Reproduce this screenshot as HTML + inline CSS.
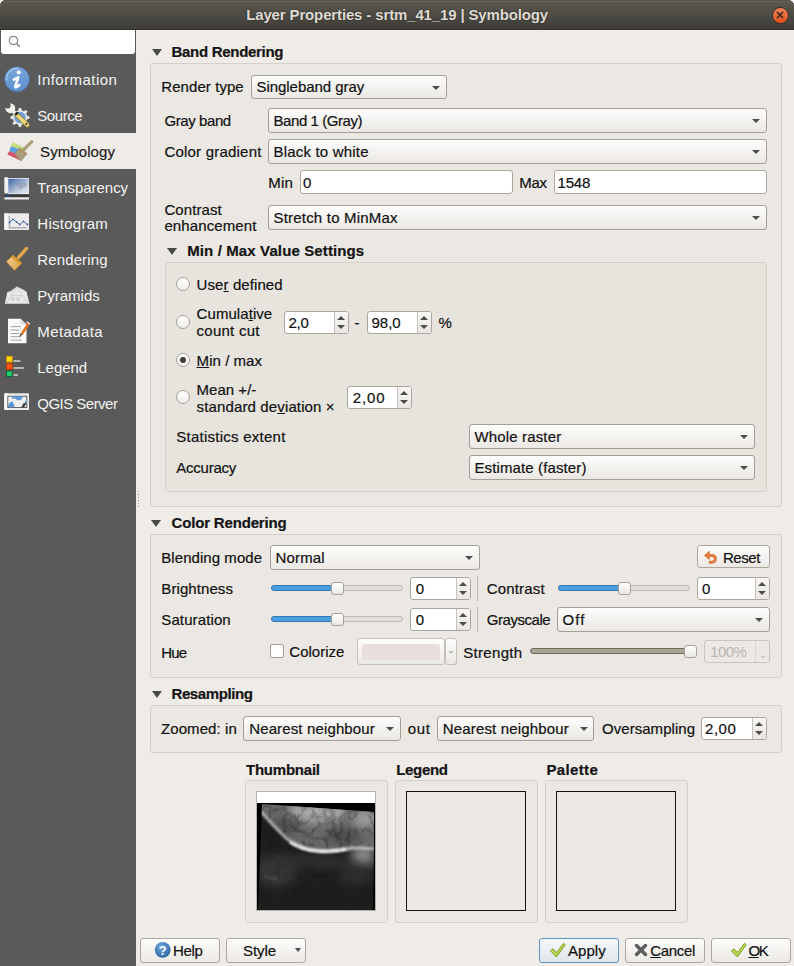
<!DOCTYPE html><html><head><meta charset="utf-8"><style>
*{box-sizing:border-box}
body{margin:0;width:794px;height:966px;position:relative;overflow:hidden;background:#fff;font-family:"Liberation Sans",sans-serif;color:#111}
.t{-webkit-text-stroke:0.2px currentColor}
.t{position:absolute;white-space:nowrap}
.cb,.le,.gb,.bt,.rb,.sp,.arr,.trk,.trkb,.hdl,.ab{position:absolute}
.cb{border:1px solid #a39f98;border-radius:3px;background:linear-gradient(#fdfdfc,#ebe8e4)}
.le{border:1px solid #aba79f;border-radius:3px;background:#fff}
.gb{border:1px solid #d3cfca;border-radius:3px;background:rgba(40,30,20,0.018)}
.bt{border:1px solid #aba79f;border-radius:3px;background:linear-gradient(#fdfdfc,#ebe8e4)}
.bd{position:absolute;border:1px solid #5f93c6;border-radius:3px;background:linear-gradient(#f6f8fa,#dfe6ec)}
.rb{width:14px;height:14px;border-radius:50%;border:1px solid #a3a09a;background:linear-gradient(#fff,#f0eeeb)}
.arr{width:0;height:0}
.trk{height:6px;border-radius:3px;background:#e2dfda;border:1px solid #bdb9b3}
.trkb{height:6px;border-radius:3px;background:#4a9fe2;border:1px solid #3578b4}
.hdl{width:13px;height:13px;border-radius:3px;border:1px solid #a6a29b;background:linear-gradient(#fff,#eae7e3)}
</style></head><body>
<div style="position:absolute;left:0;top:0;width:794px;height:966px;background:#efece8;border-radius:6px 6px 0 0"></div>
<div style="position:absolute;left:0;top:0;width:794px;height:30px;border-radius:6px 6px 0 0;background:linear-gradient(#5c5951,#3d3c37);box-shadow:inset 0 1px 0 #57544c, inset 0 2px 0 #656258, inset 0 -1px 0 #33322e"></div>
<div class="t" style="left:246.20px;top:6.70px;font-size:15px;line-height:15px;letter-spacing:-0.141px;font-weight:bold;color:#dfdbd2;-webkit-text-stroke:0;text-shadow:0 0 1.5px #1e1d1a;">Layer Properties - srtm_41_19 | Symbology</div>
<div style="position:absolute;left:771.5px;top:6.5px;width:17px;height:17px;border-radius:50%;background:linear-gradient(#f0825a,#e0521c);border:1px solid #3a2d25"></div>
<svg style="position:absolute;left:774px;top:9px" width="12" height="12"><path d="M3 3L9 9M9 3L3 9" stroke="#3b2a1e" stroke-width="1.6"/></svg>
<div style="position:absolute;left:0;top:30px;width:136px;height:936px;background:#5a5a5a"></div>
<div style="position:absolute;left:1px;top:30px;width:134px;height:24px;background:#fff;border-radius:0 0 3px 3px"></div>
<svg style="position:absolute;left:8px;top:35px" width="14" height="14"><circle cx="5.5" cy="5.5" r="4.2" fill="none" stroke="#8a8a8a" stroke-width="1.2"/><path d="M8.6 8.6L12 12" stroke="#8a8a8a" stroke-width="1.5"/></svg>
<div style="position:absolute;left:0;top:133px;width:136px;height:36px;background:#efece8"></div>
<div class="t" style="left:37.30px;top:72.20px;font-size:15px;line-height:15px;letter-spacing:0.455px;color:#f4f3f1;-webkit-text-stroke:0;">Information</div>
<div class="t" style="left:37.30px;top:108.20px;font-size:15px;line-height:15px;letter-spacing:-0.450px;color:#f4f3f1;-webkit-text-stroke:0;">Source</div>
<div class="t" style="left:40.10px;top:144.20px;font-size:15px;line-height:15px;letter-spacing:0.075px;color:#1c1c1c;">Symbology</div>
<div class="t" style="left:37.30px;top:180.20px;font-size:15px;line-height:15px;letter-spacing:-0.032px;color:#f4f3f1;-webkit-text-stroke:0;">Transparency</div>
<div class="t" style="left:37.30px;top:216.20px;font-size:15px;line-height:15px;letter-spacing:0.269px;color:#f4f3f1;-webkit-text-stroke:0;">Histogram</div>
<div class="t" style="left:37.30px;top:252.20px;font-size:15px;line-height:15px;letter-spacing:0.125px;color:#f4f3f1;-webkit-text-stroke:0;">Rendering</div>
<div class="t" style="left:37.30px;top:288.20px;font-size:15px;line-height:15px;letter-spacing:-0.014px;color:#f4f3f1;-webkit-text-stroke:0;">Pyramids</div>
<div class="t" style="left:37.30px;top:324.20px;font-size:15px;line-height:15px;letter-spacing:0.393px;color:#f4f3f1;-webkit-text-stroke:0;">Metadata</div>
<div class="t" style="left:37.30px;top:360.20px;font-size:15px;line-height:15px;letter-spacing:-0.030px;color:#f4f3f1;-webkit-text-stroke:0;">Legend</div>
<div class="t" style="left:37.30px;top:396.20px;font-size:15px;line-height:15px;letter-spacing:-0.525px;color:#f4f3f1;-webkit-text-stroke:0;">QGIS Server</div>
<div style="position:absolute;left:138px;top:491px;width:1px;height:1px;background:#9a9893"></div>
<div style="position:absolute;left:138px;top:494px;width:1px;height:1px;background:#9a9893"></div>
<div style="position:absolute;left:138px;top:497px;width:1px;height:1px;background:#9a9893"></div>
<div style="position:absolute;left:138px;top:500px;width:1px;height:1px;background:#9a9893"></div>
<div style="position:absolute;left:138px;top:503px;width:1px;height:1px;background:#9a9893"></div>
<div style="position:absolute;left:138px;top:506px;width:1px;height:1px;background:#9a9893"></div>
<svg style="position:absolute;left:0;top:61px" width="36" height="36"><defs><linearGradient id="ig" x1="0" y1="0" x2="0" y2="1"><stop offset="0" stop-color="#7ba8dc"/><stop offset="1" stop-color="#5d8fcc"/></linearGradient></defs><circle cx="17" cy="18.2" r="12.3" fill="url(#ig)" stroke="#4f7cb9" stroke-width="0.9"/><path d="M6.8 19.5A10.5 10.5 0 0 1 18.5 7.2" fill="none" stroke="#a9c8ec" stroke-width="1.3"/><circle cx="18.8" cy="11.3" r="2.1" fill="#fff"/><path d="M13.8 18.6L18.2 16.4L15.4 25.3Q15.1 26.6 16.4 26.1L19.4 24.2" fill="none" stroke="#fff" stroke-width="2.7" stroke-linejoin="round" stroke-linecap="round"/></svg>
<svg style="position:absolute;left:0;top:97px" width="36" height="36"><path d="M26.9 19.3 L29.1 19.5 L29.1 21.5 L26.9 21.7 L25.7 24.5 L27.2 26.3 L25.8 27.7 L24.0 26.2 L21.2 27.4 L21.0 29.6 L19.0 29.6 L18.8 27.4 L16.0 26.2 L14.2 27.7 L12.8 26.3 L14.3 24.5 L13.1 21.7 L10.9 21.5 L10.9 19.5 L13.1 19.3 L14.3 16.5 L12.8 14.7 L14.2 13.3 L16.0 14.8 L18.8 13.6 L19.0 11.4 L21.0 11.4 L21.2 13.6 L24.0 14.8 L25.8 13.3 L27.2 14.7 L25.7 16.5Z" fill="#ececec" stroke="#ececec" stroke-width="0.8" stroke-linejoin="round"/><circle cx="20" cy="20.5" r="5.8" fill="#6d9fd8"/><path d="M11.5 13L16.5 17.5" stroke="#e6e7e3" stroke-width="3.6" stroke-linecap="round"/><circle cx="10.3" cy="11.3" r="4.9" fill="#eeefeb"/><circle cx="7.6" cy="8.6" r="3" fill="#5a5a5a"/><path d="M17 18L27.3 28" stroke="#8a7a30" stroke-width="5" stroke-linecap="round"/><path d="M17.2 18.2L27.2 27.9" stroke="#ecd77a" stroke-width="3.6" stroke-linecap="round"/><path d="M15.3 17.9L17.9 15.4" stroke="#222" stroke-width="2.2"/><circle cx="26.3" cy="27" r="1.1" fill="#333"/></svg>
<svg style="position:absolute;left:0;top:133px" width="36" height="36"><path d="M12.5 9.2L24.6 14.7L23 17.5L11 13.2Z" fill="#c6db7a"/><path d="M11 13.2L23 17.5L20.5 22L9.2 18.2Z" fill="#5b9fdc"/><path d="M9.2 18.2L20.5 22L21 27.8L7.3 21.6Z" fill="#d2566a"/><path d="M14.6 20.8L19.6 15L26.6 21.2L21 28Z" fill="#aa9f7e" stroke="#8f8466" stroke-width="0.6"/><path d="M22 18.5L31.8 8.7" stroke="#ad9f78" stroke-width="3.2" stroke-linecap="round"/><path d="M19 15.5L26.8 21.5" stroke="#a89670" stroke-width="2.4"/></svg>
<svg style="position:absolute;left:0;top:169px" width="36" height="36"><defs><linearGradient id="tg" x1="0" y1="0" x2="1" y2="1"><stop offset="0" stop-color="#3d62a8"/><stop offset="0.6" stop-color="#b9c6dc"/><stop offset="1" stop-color="#e9ecf1"/></linearGradient></defs><rect x="4.3" y="8" width="3.8" height="16.5" rx="1.6" fill="#f1f1f1"/><rect x="8" y="9" width="21" height="16" fill="#eef0f3"/><rect x="8.3" y="9.8" width="20.4" height="14.6" fill="url(#tg)"/><path d="M16 13.5l4 0.5 6-1 1 3-2 2-3 1-1 2.5-2-2-1-3-2-1z M10.5 16l2 1 1 3-1.5 2z" fill="#8b96a8" opacity="0.55"/><rect x="4.3" y="25.7" width="24.7" height="2.4" fill="#3a3a3a"/><rect x="6.7" y="25.3" width="2" height="3.6" rx="0.8" fill="#2a56a0"/><rect x="4.3" y="28.3" width="24.7" height="2.2" fill="#ededed"/></svg>
<svg style="position:absolute;left:0;top:205px" width="36" height="36"><rect x="4.3" y="8.3" width="24.7" height="16.7" fill="#ebebeb"/><rect x="4.3" y="8" width="3.8" height="17" rx="1.6" fill="#f6f6f6"/><path d="M9.4 11v11.7h17.5" fill="none" stroke="#b2b2b2" stroke-width="1.4"/><path d="M9.5 17.5L12.8 14.3L16.5 16.8L19.7 19.5L23.4 16.4L27.4 19.5" fill="none" stroke="#3a62a8" stroke-width="0.9"/><g fill="#3a62a8"><circle cx="9.5" cy="17.5" r="0.9"/><circle cx="12.8" cy="14.3" r="0.9"/><circle cx="16.5" cy="16.8" r="0.9"/><circle cx="19.7" cy="19.5" r="0.9"/><circle cx="23.4" cy="16.4" r="0.9"/><circle cx="27.4" cy="19.5" r="0.9"/></g></svg>
<svg style="position:absolute;left:0;top:241px" width="36" height="36"><defs><linearGradient id="rg" x1="0" y1="0" x2="1" y2="1"><stop offset="0" stop-color="#f2cf8e"/><stop offset="1" stop-color="#d9a148"/></linearGradient></defs><path d="M18.5 16.5L26.5 7.5" stroke="#e0a548" stroke-width="3.4" stroke-linecap="round"/><path d="M6.3 20.6L13.2 14.2L21.5 22.3L14.6 29.4Z" fill="url(#rg)" stroke="#c88a30" stroke-width="0.7"/><path d="M12.2 15L21.2 23" stroke="#d8982e" stroke-width="2.6"/></svg>
<svg style="position:absolute;left:0;top:277px" width="36" height="36"><path d="M4.8 26.8L7.3 15L10.5 14.2L17 9.4L23.5 12.8L26.5 14.8L29.5 26.8Z" fill="#e9e9e9"/><path d="M6.5 26L17 9.8L27.5 26M10.5 18.7H23" fill="none" stroke="#c9c9c9" stroke-width="0.8"/><path d="M11.5 20.5l1.5 3 1-2.5M17 20.3l1 3 1.5-2.5" fill="none" stroke="#b8b8b8" stroke-width="0.9"/></svg>
<svg style="position:absolute;left:0;top:313px" width="36" height="36"><path d="M8 5.8H20.5L26.5 11.5V30.3H8Z" fill="#fafafa"/><path d="M20.5 5.8V11.5H26.5" fill="#dedede"/><g stroke="#9a9a9a" stroke-width="0.9"><path d="M10.6 13.6H21M10.6 17H19M10.6 20.5H19M10.6 23.7H21M10.6 27.1H22"/></g><path d="M19.5 24L21.3 19.5L27.6 9.3L30 10.5L23.5 21Z" fill="#e8742a"/><path d="M27 8.2L30.3 10.3L29.5 11.4L26.2 9.4Z" fill="#e6d5cf"/><path d="M19.2 24L20.5 20L22.5 21.5Z" fill="#555"/></svg>
<svg style="position:absolute;left:0;top:349px" width="36" height="36"><rect x="6.6" y="7.4" width="5.6" height="5.6" fill="#ffd800" stroke="#e89a00" stroke-width="0.9"/><rect x="6.6" y="14.7" width="5.6" height="5.6" fill="#ff5a10" stroke="#c03000" stroke-width="0.9"/><rect x="6.6" y="22" width="5.6" height="5.6" fill="#22d068" stroke="#0a5a30" stroke-width="0.9"/><g fill="#b5b5b5"><rect x="13.5" y="11" width="7" height="2"/><rect x="13.5" y="18" width="10.5" height="2"/><rect x="13.5" y="25" width="4.5" height="2"/></g></svg>
<svg style="position:absolute;left:0;top:385px" width="36" height="36"><rect x="4.3" y="8.3" width="24.7" height="16.7" fill="#ececec"/><rect x="4.3" y="8" width="3.8" height="17" rx="1.6" fill="#f8f8f8"/><rect x="7.8" y="11.2" width="19" height="11.4" fill="#eeeeee" stroke="#444" stroke-width="0.8"/><path d="M12 11.5H23L21.5 14.5L18 15.5L15 13.5L12.2 13.7Z M8.2 22.3V20L10.5 17L12.5 16.5L14 19.5L14.5 22.3Z M24.5 17.5L26.3 15V19Z" fill="#5b96d8"/><path d="M21 22.6L23.5 18.3L26.8 17.8L24 22.6Z" fill="#444"/></svg>

<div class="arr" style="left:151.5px;top:49px;border-left:5.5px solid transparent;border-right:5.5px solid transparent;border-top:7px solid #4a4a4a;"></div>
<div class="t" style="left:171.50px;top:44.10px;font-size:15px;line-height:15px;letter-spacing:-0.296px;font-weight:bold;color:#141414;">Band Rendering</div>
<div class="gb" style="left:150px;top:63px;width:632px;height:444px;"></div>
<div class="t" style="left:161.30px;top:79.40px;font-size:15px;line-height:15px;letter-spacing:0.070px;">Render type</div>
<div class="cb" style="left:251px;top:75px;width:196px;height:24px;"></div>
<div class="t" style="left:256.50px;top:79.40px;font-size:15px;line-height:15px;letter-spacing:-0.050px;">Singleband gray</div>
<div class="arr" style="left:432.0px;top:85.5px;border-left:4.0px solid transparent;border-right:4.0px solid transparent;border-top:4px solid #4c4c4c;"></div>
<div class="t" style="left:164.40px;top:113.40px;font-size:15px;line-height:15px;letter-spacing:-0.406px;">Gray band</div>
<div class="cb" style="left:268px;top:108px;width:499px;height:25px;"></div>
<div class="t" style="left:273.50px;top:113.40px;font-size:15px;line-height:15px;letter-spacing:-0.433px;">Band 1 (Gray)</div>
<div class="arr" style="left:751.5px;top:119.0px;border-left:4.0px solid transparent;border-right:4.0px solid transparent;border-top:4px solid #4c4c4c;"></div>
<div class="t" style="left:164.40px;top:144.30px;font-size:15px;line-height:15px;letter-spacing:0.215px;">Color gradient</div>
<div class="cb" style="left:268px;top:139px;width:499px;height:25px;"></div>
<div class="t" style="left:273.50px;top:144.30px;font-size:15px;line-height:15px;letter-spacing:0.188px;">Black to white</div>
<div class="arr" style="left:751.5px;top:150.0px;border-left:4.0px solid transparent;border-right:4.0px solid transparent;border-top:4px solid #4c4c4c;"></div>
<div class="t" style="left:268.20px;top:174.60px;font-size:15px;line-height:15px;letter-spacing:0.225px;">Min</div>
<div class="le" style="left:300px;top:170px;width:213px;height:24px;"></div>
<div class="t" style="left:303.00px;top:174.60px;font-size:15px;line-height:15px;">0</div>
<div class="t" style="left:519.30px;top:174.60px;font-size:15px;line-height:15px;letter-spacing:-0.375px;">Max</div>
<div class="le" style="left:554px;top:170px;width:213px;height:24px;"></div>
<div class="t" style="left:557.50px;top:174.60px;font-size:15px;line-height:15px;letter-spacing:-0.183px;">1548</div>
<div class="t" style="left:164.40px;top:201.90px;font-size:15px;line-height:15px;letter-spacing:0.100px;">Contrast</div>
<div class="t" style="left:164.40px;top:218.30px;font-size:15px;line-height:15px;letter-spacing:0.110px;">enhancement</div>
<div class="cb" style="left:268px;top:205px;width:499px;height:25px;"></div>
<div class="t" style="left:273.50px;top:210.30px;font-size:15px;line-height:15px;letter-spacing:0.197px;">Stretch to MinMax</div>
<div class="arr" style="left:751.5px;top:216.0px;border-left:4.0px solid transparent;border-right:4.0px solid transparent;border-top:4px solid #4c4c4c;"></div>
<div class="arr" style="left:167px;top:248px;border-left:5.0px solid transparent;border-right:5.0px solid transparent;border-top:7px solid #4a4a4a;"></div>
<div class="t" style="left:187.20px;top:243.30px;font-size:15px;line-height:15px;letter-spacing:0.122px;font-weight:bold;color:#141414;">Min / Max Value Settings</div>
<div class="gb" style="left:165px;top:262px;width:602px;height:230px;"></div>
<div class="rb" style="left:176px;top:277px;"></div>
<div class="t" style="left:196.60px;top:277.30px;font-size:15px;line-height:15px;letter-spacing:0.086px;">Use<u>r</u> defined</div>
<div class="rb" style="left:176px;top:315px;"></div>
<div class="t" style="left:196.60px;top:305.90px;font-size:15px;line-height:15px;letter-spacing:0.061px;">Cumula<u>t</u>ive</div>
<div class="t" style="left:196.60px;top:322.90px;font-size:15px;line-height:15px;letter-spacing:0.244px;">count cut</div>
<div class="le" style="left:284px;top:311px;width:65px;height:23px;"></div>
<div class="t" style="left:288.60px;top:315.10px;font-size:15px;line-height:15px;letter-spacing:-0.325px;">2,0</div>
<div class="sp" style="left:334px;top:312px;width:14px;height:21px;border-left:1px solid #c6c2bb;background:linear-gradient(#f8f7f5,#e9e6e2);border-radius:0 2px 2px 0"></div>
<div class="arr" style="left:337px;top:315.5px;border-left:4px solid transparent;border-right:4px solid transparent;border-bottom:4px solid #4c4c4c;"></div>
<div class="arr" style="left:337px;top:324.5px;border-left:4px solid transparent;border-right:4px solid transparent;border-top:4px solid #4c4c4c;"></div>
<div class="t" style="left:354.60px;top:315.10px;font-size:15px;line-height:15px;">-</div>
<div class="le" style="left:367px;top:311px;width:65px;height:23px;"></div>
<div class="t" style="left:371.60px;top:315.10px;font-size:15px;line-height:15px;letter-spacing:-0.067px;">98,0</div>
<div class="sp" style="left:417px;top:312px;width:14px;height:21px;border-left:1px solid #c6c2bb;background:linear-gradient(#f8f7f5,#e9e6e2);border-radius:0 2px 2px 0"></div>
<div class="arr" style="left:420px;top:315.5px;border-left:4px solid transparent;border-right:4px solid transparent;border-bottom:4px solid #4c4c4c;"></div>
<div class="arr" style="left:420px;top:324.5px;border-left:4px solid transparent;border-right:4px solid transparent;border-top:4px solid #4c4c4c;"></div>
<div class="t" style="left:438.40px;top:315.10px;font-size:15px;line-height:15px;">%</div>
<div class="rb" style="left:176px;top:353px;"></div>
<div style="position:absolute;left:180px;top:357px;width:6px;height:6px;border-radius:50%;background:#3c3c3c"></div>
<div class="t" style="left:196.60px;top:353.30px;font-size:15px;line-height:15px;letter-spacing:0.050px;"><u>M</u>in / max</div>
<div class="rb" style="left:176px;top:390px;"></div>
<div class="t" style="left:196.60px;top:382.20px;font-size:15px;line-height:15px;letter-spacing:0.014px;">Mean +/-</div>
<div class="t" style="left:196.60px;top:399.20px;font-size:15px;line-height:15px;letter-spacing:0.132px;">standard de<u>v</u>iation ×</div>
<div class="le" style="left:347px;top:386px;width:65px;height:23px;"></div>
<div class="t" style="left:352.70px;top:390.30px;font-size:15px;line-height:15px;letter-spacing:0.933px;">2,00</div>
<div class="sp" style="left:397px;top:387px;width:14px;height:21px;border-left:1px solid #c6c2bb;background:linear-gradient(#f8f7f5,#e9e6e2);border-radius:0 2px 2px 0"></div>
<div class="arr" style="left:400px;top:390.5px;border-left:4px solid transparent;border-right:4px solid transparent;border-bottom:4px solid #4c4c4c;"></div>
<div class="arr" style="left:400px;top:399.5px;border-left:4px solid transparent;border-right:4px solid transparent;border-top:4px solid #4c4c4c;"></div>
<div class="t" style="left:176.30px;top:428.80px;font-size:15px;line-height:15px;letter-spacing:0.247px;">Statistics extent</div>
<div class="cb" style="left:469px;top:424px;width:286px;height:25px;"></div>
<div class="t" style="left:474.40px;top:428.80px;font-size:15px;line-height:15px;letter-spacing:0.159px;">Whole raster</div>
<div class="arr" style="left:740.0px;top:435.0px;border-left:4.0px solid transparent;border-right:4.0px solid transparent;border-top:4px solid #4c4c4c;"></div>
<div class="t" style="left:176.30px;top:460.10px;font-size:15px;line-height:15px;letter-spacing:-0.243px;">Accuracy</div>
<div class="cb" style="left:469px;top:455px;width:286px;height:25px;"></div>
<div class="t" style="left:474.40px;top:460.10px;font-size:15px;line-height:15px;letter-spacing:0.125px;">Estimate (faster)</div>
<div class="arr" style="left:740.0px;top:466.0px;border-left:4.0px solid transparent;border-right:4.0px solid transparent;border-top:4px solid #4c4c4c;"></div>
<div class="arr" style="left:151px;top:520px;border-left:5.5px solid transparent;border-right:5.5px solid transparent;border-top:7px solid #4a4a4a;"></div>
<div class="t" style="left:171.60px;top:515.10px;font-size:15px;line-height:15px;letter-spacing:-0.179px;font-weight:bold;color:#141414;">Color Rendering</div>
<div class="gb" style="left:150px;top:534px;width:632px;height:144px;"></div>
<div class="t" style="left:161.30px;top:549.80px;font-size:15px;line-height:15px;letter-spacing:0.054px;">Blending mode</div>
<div class="cb" style="left:270px;top:545px;width:210px;height:25px;"></div>
<div class="t" style="left:275.60px;top:549.80px;font-size:15px;line-height:15px;letter-spacing:0.130px;">Normal</div>
<div class="arr" style="left:464.5px;top:556.0px;border-left:4.0px solid transparent;border-right:4.0px solid transparent;border-top:4px solid #4c4c4c;"></div>
<div class="bt" style="left:697px;top:545px;width:73px;height:23px;"></div>
<div class="t" style="left:722.90px;top:550.00px;font-size:15px;line-height:15px;letter-spacing:-0.425px;">Reset</div>
<div class="t" style="left:161.30px;top:580.60px;font-size:15px;line-height:15px;letter-spacing:0.083px;">Brightness</div>
<div class="trk" style="left:271px;top:585px;width:132px;"></div>
<div class="trkb" style="left:271px;top:585px;width:62px;"></div>
<div class="hdl" style="left:331px;top:582px;"></div>
<div class="le" style="left:410px;top:577px;width:61px;height:23px;"></div>
<div class="t" style="left:415.70px;top:581.30px;font-size:15px;line-height:15px;">0</div>
<div class="sp" style="left:456px;top:578px;width:14px;height:21px;border-left:1px solid #c6c2bb;background:linear-gradient(#f8f7f5,#e9e6e2);border-radius:0 2px 2px 0"></div>
<div class="arr" style="left:459px;top:581.5px;border-left:4px solid transparent;border-right:4px solid transparent;border-bottom:4px solid #4c4c4c;"></div>
<div class="arr" style="left:459px;top:590.5px;border-left:4px solid transparent;border-right:4px solid transparent;border-top:4px solid #4c4c4c;"></div>
<div style="position:absolute;left:477px;top:576px;width:1px;height:25px;background:#bdb9b2"></div>
<div class="t" style="left:486.70px;top:581.30px;font-size:15px;line-height:15px;letter-spacing:0.186px;">Contrast</div>
<div class="trk" style="left:558px;top:585px;width:132px;"></div>
<div class="trkb" style="left:558px;top:585px;width:62px;"></div>
<div class="hdl" style="left:618px;top:582px;"></div>
<div class="le" style="left:697px;top:577px;width:73px;height:23px;"></div>
<div class="t" style="left:702.00px;top:581.30px;font-size:15px;line-height:15px;">0</div>
<div class="sp" style="left:755px;top:578px;width:14px;height:21px;border-left:1px solid #c6c2bb;background:linear-gradient(#f8f7f5,#e9e6e2);border-radius:0 2px 2px 0"></div>
<div class="arr" style="left:758px;top:581.5px;border-left:4px solid transparent;border-right:4px solid transparent;border-bottom:4px solid #4c4c4c;"></div>
<div class="arr" style="left:758px;top:590.5px;border-left:4px solid transparent;border-right:4px solid transparent;border-top:4px solid #4c4c4c;"></div>
<div class="t" style="left:161.30px;top:611.90px;font-size:15px;line-height:15px;letter-spacing:0.111px;">Saturation</div>
<div class="trk" style="left:271px;top:616px;width:132px;"></div>
<div class="trkb" style="left:271px;top:616px;width:62px;"></div>
<div class="hdl" style="left:331px;top:613px;"></div>
<div class="le" style="left:410px;top:608px;width:61px;height:23px;"></div>
<div class="t" style="left:415.70px;top:612.30px;font-size:15px;line-height:15px;">0</div>
<div class="sp" style="left:456px;top:609px;width:14px;height:21px;border-left:1px solid #c6c2bb;background:linear-gradient(#f8f7f5,#e9e6e2);border-radius:0 2px 2px 0"></div>
<div class="arr" style="left:459px;top:612.5px;border-left:4px solid transparent;border-right:4px solid transparent;border-bottom:4px solid #4c4c4c;"></div>
<div class="arr" style="left:459px;top:621.5px;border-left:4px solid transparent;border-right:4px solid transparent;border-top:4px solid #4c4c4c;"></div>
<div style="position:absolute;left:477px;top:607px;width:1px;height:25px;background:#bdb9b2"></div>
<div class="t" style="left:486.70px;top:612.30px;font-size:15px;line-height:15px;letter-spacing:-0.438px;">Grayscale</div>
<div class="cb" style="left:557px;top:607px;width:213px;height:25px;"></div>
<div class="t" style="left:562.40px;top:612.30px;font-size:15px;line-height:15px;letter-spacing:1.125px;">Off</div>
<div class="arr" style="left:754.5px;top:618.0px;border-left:4.0px solid transparent;border-right:4.0px solid transparent;border-top:4px solid #4c4c4c;"></div>
<div class="t" style="left:161.30px;top:645.00px;font-size:15px;line-height:15px;letter-spacing:-0.900px;">Hue</div>
<div style="position:absolute;left:270px;top:644px;width:14px;height:14px;border:1px solid #a3a09a;border-radius:2px;background:#fff"></div>
<div class="t" style="left:289.30px;top:644.10px;font-size:15px;line-height:15px;">Colorize</div>
<div class="bt" style="left:357px;top:638px;width:88px;height:27px;border-color:#c3bfb9"></div>
<div style="position:absolute;left:362px;top:644px;width:78px;height:16px;border-radius:3px;background:#e8dfdd"></div>
<div class="bt" style="left:445px;top:638px;width:12px;height:27px;border-color:#c3bfb9"></div>
<div class="arr" style="left:448.0px;top:650.5px;border-left:3.0px solid transparent;border-right:3.0px solid transparent;border-top:3px solid #c0bdb7;"></div>
<div class="t" style="left:463.20px;top:644.80px;font-size:15px;line-height:15px;letter-spacing:0.329px;">Strength</div>
<div class="trk" style="left:530px;top:648px;width:166px;background:#a9a594;border-color:#6f6c60"></div>
<div class="hdl" style="left:684px;top:645px;"></div>
<div class="le" style="left:704px;top:640px;width:66px;height:23px;background:#ece9e5;border-color:#c9c6c0;"></div>
<div class="t" style="left:710.20px;top:644.30px;font-size:15px;line-height:15px;letter-spacing:-0.583px;color:#bdbab4;">100%</div>
<div class="sp" style="left:755px;top:641px;height:21px;border-left:1px solid #d9d6d1"></div>
<div class="arr" style="left:759.5px;top:655.5px;border-left:3px solid transparent;border-right:3px solid transparent;border-top:3px solid #d0cdc7;"></div>
<div class="arr" style="left:152px;top:691px;border-left:5.5px solid transparent;border-right:5.5px solid transparent;border-top:7px solid #4a4a4a;"></div>
<div class="t" style="left:171.50px;top:685.70px;font-size:15px;line-height:15px;letter-spacing:-0.400px;font-weight:bold;color:#141414;">Resampling</div>
<div class="gb" style="left:150px;top:705px;width:632px;height:48px;"></div>
<div class="t" style="left:161.00px;top:721.20px;font-size:15px;line-height:15px;letter-spacing:0.083px;">Zoomed: in</div>
<div class="cb" style="left:243px;top:716px;width:158px;height:25px;"></div>
<div class="t" style="left:249.20px;top:721.20px;font-size:15px;line-height:15px;letter-spacing:0.137px;">Nearest neighbour</div>
<div class="arr" style="left:385.7px;top:727.0px;border-left:4.0px solid transparent;border-right:4.0px solid transparent;border-top:4px solid #4c4c4c;"></div>
<div class="t" style="left:407.80px;top:721.20px;font-size:15px;line-height:15px;letter-spacing:0.575px;">out</div>
<div class="cb" style="left:437px;top:716px;width:157px;height:25px;"></div>
<div class="t" style="left:442.80px;top:721.20px;font-size:15px;line-height:15px;letter-spacing:0.162px;">Nearest neighbour</div>
<div class="arr" style="left:580.3px;top:727.0px;border-left:4.0px solid transparent;border-right:4.0px solid transparent;border-top:4px solid #4c4c4c;"></div>
<div class="t" style="left:602.00px;top:721.20px;font-size:15px;line-height:15px;letter-spacing:0.041px;">Oversampling</div>
<div class="le" style="left:701px;top:717px;width:66px;height:23px;"></div>
<div class="t" style="left:705.10px;top:721.30px;font-size:15px;line-height:15px;letter-spacing:0.500px;">2,00</div>
<div class="sp" style="left:752px;top:718px;width:14px;height:21px;border-left:1px solid #c6c2bb;background:linear-gradient(#f8f7f5,#e9e6e2);border-radius:0 2px 2px 0"></div>
<div class="arr" style="left:755px;top:721.5px;border-left:4px solid transparent;border-right:4px solid transparent;border-bottom:4px solid #4c4c4c;"></div>
<div class="arr" style="left:755px;top:730.5px;border-left:4px solid transparent;border-right:4px solid transparent;border-top:4px solid #4c4c4c;"></div>
<div class="t" style="left:246.00px;top:762.10px;font-size:15px;line-height:15px;letter-spacing:-0.231px;font-weight:bold;color:#141414;">Thumbnail</div>
<div class="t" style="left:396.30px;top:762.10px;font-size:15px;line-height:15px;letter-spacing:-0.350px;font-weight:bold;color:#141414;">Legend</div>
<div class="t" style="left:546.40px;top:762.10px;font-size:15px;line-height:15px;letter-spacing:0.367px;font-weight:bold;color:#141414;">Palette</div>
<div class="gb" style="left:245px;top:780px;width:143px;height:143px;"></div>
<div class="gb" style="left:395px;top:780px;width:143px;height:143px;"></div>
<div class="gb" style="left:545px;top:780px;width:143px;height:143px;"></div>
<div style="position:absolute;left:256px;top:791px;width:120px;height:120px;border:1px solid #b5b2ac"></div>
<div style="position:absolute;left:257px;top:792px;width:118px;height:11px;background:#fff"></div>
<svg style="position:absolute;left:257px;top:803px" width="118" height="107" viewBox="1 0 118 107">
<defs>
<filter id="bl" filterUnits="userSpaceOnUse" x="-20" y="-20" width="160" height="150"><feGaussianBlur stdDeviation="1.2"/></filter>
<filter id="bl2" filterUnits="userSpaceOnUse" x="-20" y="-20" width="160" height="150"><feGaussianBlur stdDeviation="5"/></filter>
<filter id="tx" filterUnits="userSpaceOnUse" x="0" y="0" width="120" height="108"><feTurbulence type="turbulence" baseFrequency="0.07" numOctaves="4" seed="5"/><feColorMatrix values="0 0 0 0 0  0 0 0 0 0  0 0 0 0 0  0 0 0 -3 1.0"/><feGaussianBlur stdDeviation="0.4"/></filter>
<clipPath id="cp"><path d="M6 1L118 9V50L117 104L116 107H2L4 60Z"/></clipPath>
<clipPath id="up"><path d="M0 0H120V47L100 45L84 48L62 47L45 43L30 33L15 18L4 8Z"/></clipPath>
</defs>
<rect width="120" height="108" fill="#000"/>
<g clip-path="url(#cp)">
<rect width="120" height="108" fill="#1e1e1e"/>
<ellipse cx="20" cy="68" rx="22" ry="16" fill="#353535" filter="url(#bl2)"/>
<ellipse cx="100" cy="70" rx="18" ry="12" fill="#2e2e2e" filter="url(#bl2)"/>
<ellipse cx="60" cy="58" rx="40" ry="6" fill="#303030" filter="url(#bl2)"/>
<g clip-path="url(#up)">
<rect width="120" height="60" fill="#686868"/>
<ellipse cx="62" cy="8" rx="30" ry="12" fill="#a8a8a8" filter="url(#bl2)"/>
<ellipse cx="110" cy="16" rx="14" ry="10" fill="#9a9a9a" filter="url(#bl2)"/>
<ellipse cx="28" cy="24" rx="14" ry="10" fill="#505050" filter="url(#bl2)"/>
<ellipse cx="88" cy="34" rx="18" ry="8" fill="#4c4c4c" filter="url(#bl2)"/>
<rect width="120" height="60" filter="url(#tx)" opacity="0.22"/>
</g>
<path d="M96 44L118 44V62L96 58Z" fill="#8a8a8a" filter="url(#bl2)"/>
<path d="M4 8Q18 23 30 35Q44 46 62 48Q80 49 98 45L118 46" fill="none" stroke="#b8b8b8" stroke-width="3" filter="url(#bl)"/>
<path d="M34 39Q46 47 62 48Q76 49 90 46" fill="none" stroke="#ececec" stroke-width="3" filter="url(#bl)"/>
<path d="M8 73Q15 76 22 76" fill="none" stroke="#4a4a4a" stroke-width="2.5" filter="url(#bl)"/>
<rect y="48" width="120" height="60" filter="url(#tx)" opacity="0.1"/>
</g>
</svg>

<div style="position:absolute;left:406px;top:791px;width:120px;height:120px;border:1.5px solid #111"></div>
<div style="position:absolute;left:556px;top:791px;width:120px;height:120px;border:1.5px solid #111"></div>
<div class="bt" style="left:140px;top:938px;width:80px;height:25px;"></div>
<div class="t" style="left:172.90px;top:942.60px;font-size:15px;line-height:15px;letter-spacing:-0.283px;">Help</div>
<div class="bt" style="left:226px;top:938px;width:80px;height:25px;"></div>
<div class="t" style="left:243.00px;top:942.60px;font-size:15px;line-height:15px;letter-spacing:-0.088px;">Style</div>
<div class="arr" style="left:294.5px;top:948.0px;border-left:3.5px solid transparent;border-right:3.5px solid transparent;border-top:4px solid #4c4c4c;"></div>
<div class="bd" style="left:539px;top:938px;width:80px;height:25px;"></div>
<div class="t" style="left:568.00px;top:942.90px;font-size:15px;line-height:15px;letter-spacing:0.050px;">Apply</div>
<div class="bt" style="left:625px;top:938px;width:80px;height:25px;"></div>
<div class="t" style="left:650.30px;top:942.80px;font-size:15px;line-height:15px;letter-spacing:-0.340px;"><u>C</u>ancel</div>
<div class="bt" style="left:711px;top:938px;width:80px;height:25px;"></div>
<div class="t" style="left:748.40px;top:942.80px;font-size:15px;line-height:15px;letter-spacing:-1.350px;"><u>O</u>K</div>
<svg style="position:absolute;left:154px;top:941px" width="18" height="18"><defs><radialGradient id="hg" cx="0.4" cy="0.3" r="0.8"><stop offset="0" stop-color="#6ea6dc"/><stop offset="1" stop-color="#25609f"/></radialGradient></defs><circle cx="8.7" cy="8.8" r="7.9" fill="url(#hg)"/><text x="8.7" y="13.6" text-anchor="middle" font-family="Liberation Sans" font-size="13" font-weight="bold" fill="#fff">?</text></svg>
<svg style="position:absolute;left:548px;top:941px" width="20" height="18"><path d="M2.5 9.8L5 7.8L8.6 11.5L15.5 2.3L17.2 3.8L9 15.3L7.6 15.3Z" fill="#b6d84e" stroke="#76961c" stroke-width="0.9" stroke-linejoin="round"/></svg>
<svg style="position:absolute;left:729px;top:941px" width="20" height="18"><path d="M2.5 9.8L5 7.8L8.6 11.5L15.5 2.3L17.2 3.8L9 15.3L7.6 15.3Z" fill="#b6d84e" stroke="#76961c" stroke-width="0.9" stroke-linejoin="round"/></svg>
<svg style="position:absolute;left:633px;top:942px" width="16" height="16"><path d="M3.5 3.5L12.5 12.5M12.5 3.5L3.5 12.5" stroke="#5c5c5c" stroke-width="3.4" stroke-linecap="round"/></svg>
<svg style="position:absolute;left:702px;top:548px" width="17" height="17"><path d="M7.8 2.6L1.8 7.4L7.8 12.2Z" fill="#e27c3e"/><path d="M6.5 7.4H10A3.4 3.4 0 0 1 10 14.2H8" fill="none" stroke="#e27c3e" stroke-width="3" stroke-linecap="round"/></svg>

</body></html>
